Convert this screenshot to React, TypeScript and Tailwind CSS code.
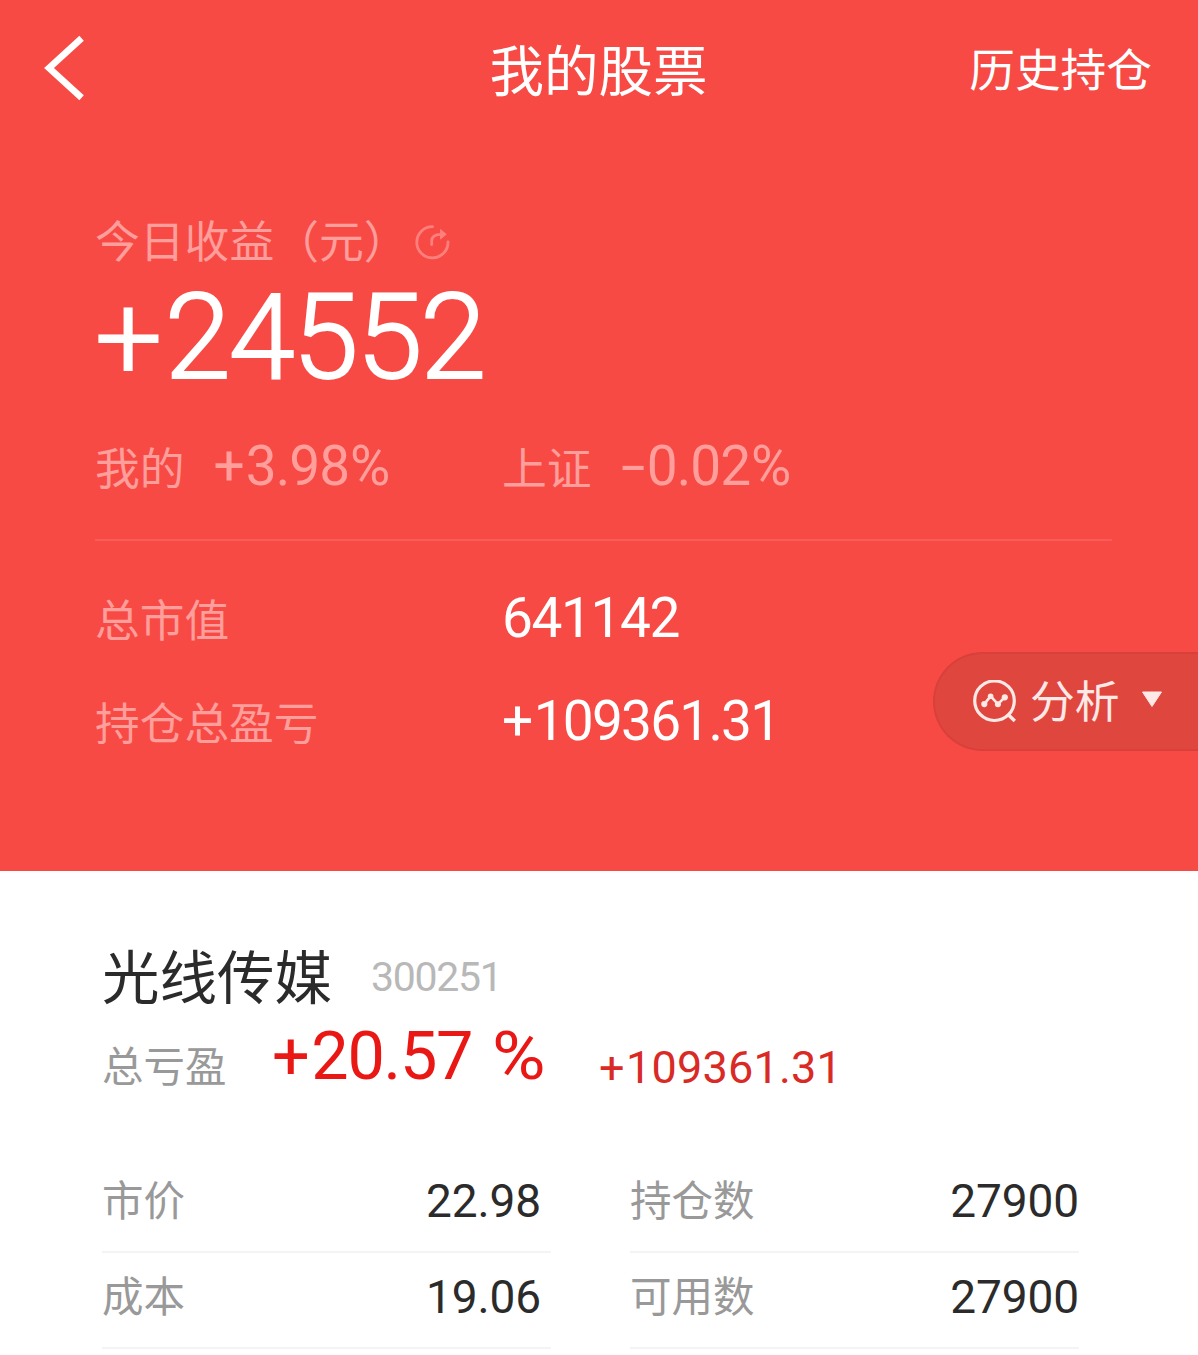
type Field = {
  label: string
  value: string
}

const leftFields: Field[] = [
  { label: '市价', value: '22.98' },
  { label: '成本', value: '19.06' },
]

const rightFields: Field[] = [
  { label: '持仓数', value: '27900' },
  { label: '可用数', value: '27900' },
]

function BackIcon() {
  return (
    <svg className="w-[40px] h-[66px]" viewBox="0 0 40 66" fill="none">
      <path d="M37.6 3.2L5 33L37.6 62.8" stroke="white" strokeWidth="6.6" />
    </svg>
  )
}

function RefreshIcon() {
  return (
    <svg className="w-[36px] h-[36px]" viewBox="0 0 36 36" fill="none">
      <path
        d="M17.5 2.7A15.6 15.6 0 1 0 33 17.8"
        stroke="#ff7f7c"
        strokeWidth="2.8"
        strokeLinecap="round"
      />
      <path
        d="M16.7 20.5V17C16.7 12.5 19.5 10.3 26.5 10.3"
        stroke="#ff7f7c"
        strokeWidth="2.8"
        strokeLinecap="round"
      />
      <path d="M25.5 5.5L31.2 10.3L25.5 15Z" fill="#ff7f7c" stroke="#ff7f7c" strokeLinejoin="round" />
    </svg>
  )
}

function AnalysisIcon() {
  return (
    <svg className="w-[44px] h-[44px]" viewBox="0 0 44 44" fill="none">
      <circle cx="21.5" cy="20.7" r="19.8" stroke="#ffe9e7" strokeWidth="3.2" />
      <path d="M34.5 34L41.8 41" stroke="#ffe9e7" strokeWidth="3.4" />
      <path
        d="M11.3 24.1L17.6 16.1L24.9 24.1L31.8 17.3"
        stroke="#ffe9e7"
        strokeWidth="2.6"
        strokeLinejoin="round"
      />
      <circle cx="11.3" cy="24.1" r="3.1" fill="#ffe9e7" />
      <circle cx="17.6" cy="16.3" r="2.8" fill="#ffe9e7" />
      <circle cx="24.9" cy="24.3" r="3" fill="#ffe9e7" />
      <circle cx="31.8" cy="17.3" r="3.1" fill="#ffe9e7" />
    </svg>
  )
}

function FieldRow({ label, value }: Field) {
  return (
    <div className="flex items-center justify-between h-24 pb-[6px] border-b-2 border-[#f4f4f4]">
      <span className="pb-[4px] text-[41.5px] leading-none text-[#999999]">{label}</span>
      <span className="font-['Roboto',sans-serif] text-[46px] leading-none tracking-[-0.1px] text-[#2b2b2b]">
        {value}
      </span>
    </div>
  )
}

export default function App() {
  return (
    <div className="w-[1198px] h-[1355px] overflow-hidden bg-white font-['Noto_Sans_CJK_SC',sans-serif] whitespace-nowrap">
      <section className="relative h-[871px] bg-[#f84a45] text-white">
        <header className="grid grid-cols-[1fr_auto_1fr] items-center h-[134px] pl-[44px] pr-[46px]">
          <button className="justify-self-start pt-[2px]">
            <BackIcon />
          </button>
          <h1 className="pt-[2px] pl-[1px] text-[54.5px] leading-none">我的股票</h1>
          <button className="justify-self-end pt-[2px] text-[45.7px] leading-none">历史持仓</button>
        </header>

        <div className="pl-[95px] pr-[86px]">
          <div className="flex items-center h-12 mt-20 text-[44.8px] leading-none text-[#ff9e9b]">
            <span className="pt-[2px]">今日收益（元）</span>
            <span className="ml-[6px] pt-[8px]">
              <RefreshIcon />
            </span>
          </div>
          <div className="mt-[15px] font-['Roboto',sans-serif] font-light text-[119px] leading-[121px] tracking-[-2.1px] [-webkit-text-stroke:2px_white]">
            <span className="tracking-[2.5px]">+</span>24552
          </div>

          <div className="flex mt-10 text-[#ff9e9b]">
            <div className="flex items-center w-[407px] h-14">
              <span className="text-[44.8px] leading-none">我的</span>
              <span className="ml-[29px] font-['Roboto',sans-serif] text-[55px] leading-none tracking-[-1px]">
                <span className="tracking-[1px]">+</span>3.98
                <span className="ml-[1px]">%</span>
              </span>
            </div>
            <div className="flex items-center h-14">
              <span className="text-[44.8px] leading-none">上证</span>
              <span className="ml-[29px] font-['Roboto',sans-serif] text-[55px] leading-none tracking-[-1px]">
                <span className="inline-block mr-[12px] origin-left scale-x-[1.6]">-</span>0.02
                <span className="ml-[1px]">%</span>
              </span>
            </div>
          </div>

          <div className="h-[2px] mt-[45px] bg-[#fa5c59]" />

          <div className="flex items-center h-14 mt-[49px]">
            <span className="w-[407px] text-[44.7px] leading-none text-[#ff9e9b]">总市值</span>
            <span className="font-['Roboto',sans-serif] text-[55px] leading-none tracking-[-1.4px]">
              641142
            </span>
          </div>
          <div className="flex items-center h-14 mt-[47px]">
            <span className="w-[407px] text-[44.7px] leading-none text-[#ff9e9b]">持仓总盈亏</span>
            <span className="font-['Roboto',sans-serif] text-[55px] leading-none tracking-[-1.8px]">
              <span className="tracking-[0.5px]">+</span>109361.31
            </span>
          </div>
        </div>

        {/* Floating analysis toggle, flush with the right edge */}
        <button className="absolute top-[652px] right-0 flex items-center w-[265px] h-[99px] pl-[38px] rounded-l-full border-2 border-r-0 border-[#d9403c] bg-[#df463e] text-[#ffe9e7]">
          <AnalysisIcon />
          <span className="ml-[13px] pb-[5px] text-[44.8px] leading-none">分析</span>
          <svg className="ml-[21px] mb-1 w-[22px] h-[17px]" viewBox="0 0 22 17">
            <path d="M1.5 1H20.5L11 15.5Z" fill="#ffe9e7" stroke="#ffe9e7" strokeLinejoin="round" />
          </svg>
        </button>
      </section>

      <section className="pt-[73px] pl-[102px] pr-[119px]">
        <div className="flex items-center h-[58px]">
          <h2 className="pt-[3px] text-[57.5px] leading-none text-[#2b2b2b]">光线传媒</h2>
          <span className="ml-[39px] pt-2 font-['Roboto',sans-serif] text-[41px] leading-none tracking-[-1.3px] text-[#b8b8b8]">
            300251
          </span>
        </div>
        <div className="flex items-center h-[68px] mt-5">
          <span className="w-[170px] pt-[18px] text-[41.5px] leading-none text-[#999999]">总亏盈</span>
          <span className="w-[327px] font-['Roboto',sans-serif] text-[66.5px] leading-none tracking-[-1.2px] text-[#e91815]">
            <span className="tracking-[1.5px]">+</span>20.57
            <span className="inline-block ml-[20px] origin-left scale-x-110">%</span>
          </span>
          <span className="pt-[23px] font-['Roboto',sans-serif] text-[45px] leading-none tracking-[0.2px] text-[#d92a26]">
            <span className="tracking-[1.5px]">+</span>109361.31
          </span>
        </div>

        <div className="flex gap-[79px] mt-[67px]">
          <div className="w-[449px] [&_span:last-child]:pr-[10px]">
            {leftFields.map((field) => (
              <FieldRow key={field.label} {...field} />
            ))}
          </div>
          <div className="w-[449px]">
            {rightFields.map((field) => (
              <FieldRow key={field.label} {...field} />
            ))}
          </div>
        </div>
      </section>
    </div>
  )
}
